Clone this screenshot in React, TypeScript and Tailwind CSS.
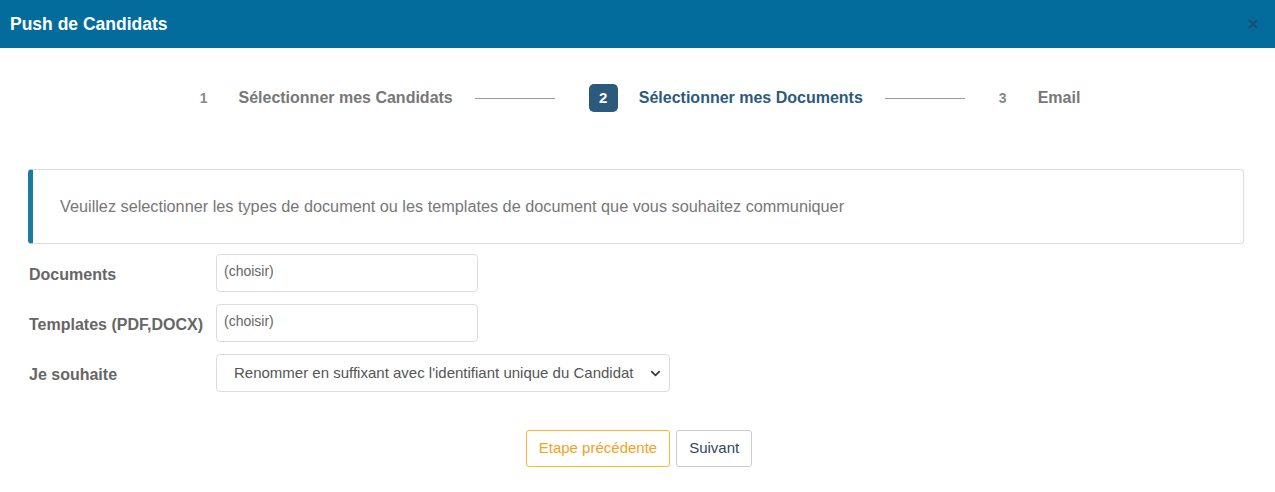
import { ChevronDown, X } from "lucide-react";

const font = "font-['Liberation_Sans',Arial,sans-serif]";

function Step({
  num,
  label,
  active,
}: {
  num: string;
  label: string;
  active?: boolean;
}) {
  return (
    <div className="flex items-center">
      {active ? (
        <span className="flex h-[28px] w-[29px] items-center justify-center rounded-[5px] bg-[#2b5a7d] text-[15px] font-bold text-white">
          {num}
        </span>
      ) : (
        <span className="text-[14px] font-bold text-[#888]">{num}</span>
      )}
      <span
        className={`text-[16px] font-bold ${
          active ? "ml-[21px] text-[#2b5a7d]" : "ml-[31px] text-[#777]"
        }`}
      >
        {label}
      </span>
    </div>
  );
}

function Line() {
  return <div className="ml-[22px] mr-[34px] h-px w-[80px] bg-[#999]" />;
}

export default function App() {
  return (
    <div className={`${font} min-h-[492px] w-[1275px] bg-white`}>
      <div className="flex h-[48px] items-center justify-between bg-[#036c9d] pl-[10px] pr-[15px]">
        <h1 className="text-[17.5px] font-bold text-white">Push de Candidats</h1>
        <X className="h-[14px] w-[14px] text-[#1c4f6f]" strokeWidth={3.5} />
      </div>

      <div className="flex items-center justify-center pl-[5px] pt-[36px]">
        <Step num="1" label="Sélectionner mes Candidats" />
        <Line />
        <Step num="2" label="Sélectionner mes Documents" active />
        <Line />
        <Step num="3" label="Email" />
      </div>

      <div className="pl-[28px] pr-[31px] pt-[57px]">
        <div className="flex h-[75px] items-center rounded-[4px] border border-[#ddd] border-l-[5px] border-l-[#1b7c9e] pl-[27px] text-[16.25px] text-[#777]">
          Veuillez selectionner les types de document ou les templates de
          document que vous souhaitez communiquer
        </div>

        <div className="mt-[10px] flex flex-col gap-[12px] pl-[1px]">
          <div className="flex items-center">
            <label className="w-[187px] pt-[3px] text-[16px] font-bold text-[#666]">
              Documents
            </label>
            <div className="h-[38px] w-[262px] rounded-[4px] border border-[#ddd] px-[7px] pt-[6px] text-[14px] text-[#666]">
              (choisir)
            </div>
          </div>
          <div className="flex items-center">
            <label className="w-[187px] pt-[3px] text-[16px] font-bold text-[#666]">
              Templates (PDF,DOCX)
            </label>
            <div className="h-[38px] w-[262px] rounded-[4px] border border-[#ddd] px-[7px] pt-[6px] text-[14px] text-[#666]">
              (choisir)
            </div>
          </div>
          <div className="flex items-center">
            <label className="w-[187px] pt-[3px] text-[16px] font-bold text-[#666]">
              Je souhaite
            </label>
            <div className="flex h-[38px] w-[454px] items-center justify-between rounded-[4px] border border-[#ddd] pl-[17px] pr-[6px] text-[15px] text-[#555]">
              <span>
                Renommer en suffixant avec l'identifiant unique du Candidat
              </span>
              <ChevronDown
                className="h-[15px] w-[15px] text-[#333]"
                strokeWidth={2.5}
              />
            </div>
          </div>
        </div>

        <div className="mt-[38px] flex justify-center gap-[6px] pl-[6px]">
          <button className="h-[37px] rounded-[3px] border border-[#f2bb2b] px-[12px] text-[15px] text-[#f5a21b]">
            Etape précédente
          </button>
          <button className="h-[37px] rounded-[3px] border border-[#ccc] px-[12px] text-[15px] text-[#2c4a5e]">
            Suivant
          </button>
        </div>
      </div>
    </div>
  );
}
